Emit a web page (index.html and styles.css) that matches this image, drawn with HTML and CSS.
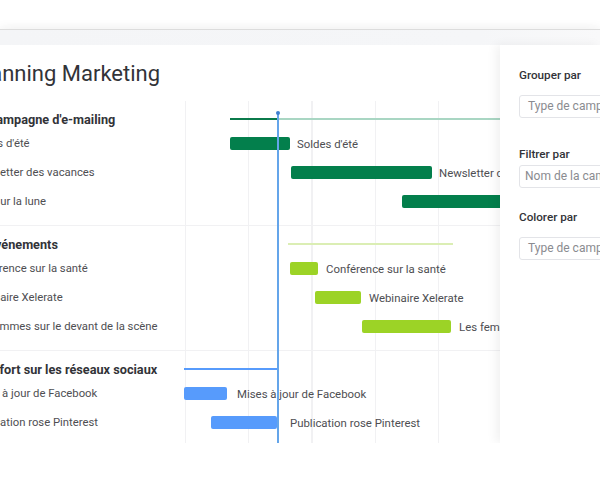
FILE: index.html
```html
<!DOCTYPE html>
<html lang="fr">
<head>
<meta charset="utf-8">
<title>Planning Marketing</title>
<link rel="stylesheet" href="styles.css">
</head>
<body>
<div class="window">
  <div class="topbar"></div>
  <div class="main">
    <div class="left">
      <div class="sheet">
        <h1 class="title">Planning Marketing</h1>
        <div class="chart">
          <div class="today"></div>

          <div class="group">
            <div class="row head">
              <div class="name">Campagne d'e-mailing</div>
              <div class="track">
                <span class="sum sum-dark" style="margin-left:45px;width:47px"></span>
                <span class="sum sum-light" style="width:260px"></span>
              </div>
            </div>
            <div class="row">
              <div class="name">Soldes d'été</div>
              <div class="track"><span class="bar green" style="margin-left:45px;width:60px"></span><span class="blabel" style="margin-left:7px">Soldes d'été</span></div>
            </div>
            <div class="row">
              <div class="name">Newsletter des vacances</div>
              <div class="track"><span class="bar green" style="margin-left:106px;width:141px"></span><span class="blabel" style="margin-left:7px">Newsletter des vacances</span></div>
            </div>
            <div class="row">
              <div class="name">Tout sur la lune</div>
              <div class="track"><span class="bar green" style="margin-left:217px;width:130px"></span></div>
            </div>
          </div>

          <div class="group">
            <div class="row head">
              <div class="name">Événements</div>
              <div class="track"><span class="sum sum-lime" style="margin-left:103px;width:165px"></span></div>
            </div>
            <div class="row">
              <div class="name">Conférence sur la santé</div>
              <div class="track"><span class="bar lime" style="margin-left:105px;width:28px"></span><span class="blabel" style="margin-left:8px">Conférence sur la santé</span></div>
            </div>
            <div class="row">
              <div class="name">Webinaire Xelerate</div>
              <div class="track"><span class="bar lime" style="margin-left:130px;width:46px"></span><span class="blabel" style="margin-left:8px">Webinaire Xelerate</span></div>
            </div>
            <div class="row">
              <div class="name">Les femmes sur le devant de la scène</div>
              <div class="track"><span class="bar lime" style="margin-left:177px;width:89px"></span><span class="blabel" style="margin-left:8px">Les femmes sur le devant de la scène</span></div>
            </div>
          </div>

          <div class="group">
            <div class="row head">
              <div class="name">Effort sur les réseaux sociaux</div>
              <div class="track"><span class="sum sum-blue" style="margin-left:-1px;width:93px"></span></div>
            </div>
            <div class="row">
              <div class="name">Mises à jour de Facebook</div>
              <div class="track"><span class="bar blue" style="margin-left:-1px;width:43px"></span><span class="blabel" style="margin-left:10px">Mises à jour de Facebook</span></div>
            </div>
            <div class="row">
              <div class="name">Publication rose Pinterest</div>
              <div class="track"><span class="bar blue" style="margin-left:26px;width:66px"></span><span class="blabel" style="margin-left:13px">Publication rose Pinterest</span></div>
            </div>
          </div>
        </div>
      </div>
    </div>
    <aside class="panel">
      <div class="plabel first">Grouper par</div>
      <div class="pinput">Type de campagne</div>
      <div class="plabel second">Filtrer par</div>
      <div class="pinput near">Nom de la campagne</div>
      <div class="plabel third">Colorer par</div>
      <div class="pinput">Type de campagne</div>
    </aside>
  </div>
</div>
</body>
</html>
```
FILE: styles.css
```css
html, body {
  margin: 0;
  padding: 0;
  background: #ffffff;
  overflow: hidden;
  font-family: Roboto, "Liberation Sans", Arial, sans-serif;
}

.window {
  margin-top: 29px;
  border-top: 1px solid #dcdcdc;
  box-shadow: 0 -2px 10px rgba(0, 0, 0, 0.05), 0 16px 24px rgba(0, 0, 0, 0.11);
  background: #ffffff;
}

.topbar {
  height: 15px;
  background: linear-gradient(90deg, #f4f5f7 0%, #f5f6f8 80%, #f9f9fa 100%);
}

.main {
  display: flex;
  height: 398px;
}

.left {
  flex: 1;
  overflow: hidden;
}

.sheet {
  margin-left: -50px;
  width: 550px;
}

.title {
  margin: 0;
  padding: 16px 0 14px 21px;
  font-size: 22px;
  line-height: 26px;
  font-weight: 400;
  color: #323338;
}

.chart {
  position: relative;
  background-image: repeating-linear-gradient(90deg, #f1f1f3 0, #f1f1f3 1px, transparent 1px, transparent 63.25px);
  background-position: 235px 0;
  background-size: 320px 100%;
  background-repeat: no-repeat;
}

.today {
  position: absolute;
  left: 327px;
  top: 12px;
  bottom: 0;
  width: 1.5px;
  background: #64a5ea;
  z-index: 2;
}

.today::before {
  content: "";
  position: absolute;
  left: -1.25px;
  top: -2px;
  width: 4px;
  height: 4px;
  border-radius: 50%;
  background: #3f7fd0;
}

.group {
  padding: 8px 0 9px;
}

.group + .group {
  border-top: 1px solid #f1f1f3;
}

.row {
  display: grid;
  grid-template-columns: 235px 315px;
  align-items: center;
  height: 29px;
}

.row.head {
  height: 20px;
}

.name {
  padding-left: 19px;
  font-size: 11.3px;
  color: #4e4e52;
  white-space: nowrap;
}

.head .name {
  padding-left: 38px;
  font-size: 12.7px;
  font-weight: 700;
  color: #323338;
}

.track {
  display: flex;
  align-items: center;
  white-space: nowrap;
}

.bar {
  flex: none;
  height: 13px;
  border-radius: 2px;
}

.green { background: #037f4c; }
.lime { background: #9cd326; }
.blue { background: #579bfc; }

.blabel {
  font-size: 11.4px;
  color: #4e4e52;
}

.sum {
  flex: none;
  height: 2px;
}

.sum-dark { background: #0b7a4b; height: 2.5px; }
.sum-light { background: #a9d6c3; height: 1.5px; }
.sum-lime { background: #dbeeb4; }
.sum-blue { background: #579bfc; }

.panel {
  position: relative;
  z-index: 3;
  flex: none;
  width: 81px;
  padding: 22px 0 0 19px;
  overflow: hidden;
  background: #ffffff;
  box-shadow: -4px 0 10px rgba(0, 0, 0, 0.06);
}

.plabel {
  font-size: 11.7px;
  line-height: 16px;
  font-weight: 500;
  color: #323338;
  white-space: nowrap;
}

.plabel.second { margin-top: 28px; }
.plabel.third { margin-top: 21px; }

.pinput {
  margin-top: 12px;
  width: 120px;
  height: 21px;
  padding-left: 8px;
  border: 1px solid #e3e4e8;
  border-radius: 3px;
  font-size: 12px;
  line-height: 21px;
  color: #8a8b90;
  white-space: nowrap;
  box-sizing: content-box;
}

.pinput.near {
  margin-top: 3px;
  padding-left: 5px;
}
```
